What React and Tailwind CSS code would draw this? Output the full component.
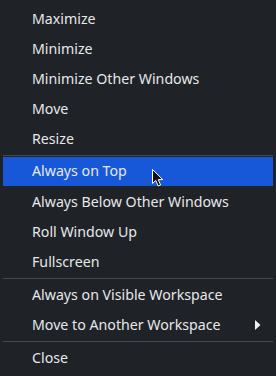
import { Fragment } from 'react';

const groups = [
  ['Maximize', 'Minimize', 'Minimize Other Windows', 'Move', 'Resize'],
  ['Always on Top', 'Always Below Other Windows', 'Roll Window Up', 'Fullscreen'],
  ['Always on Visible Workspace', 'Move to Another Workspace'],
  ['Close'],
];

const MenuItem = ({ label, active, submenu }) => (
  <div
    className={`relative flex h-[30px] items-center pl-[29px] pr-[10px] ${
      active ? 'border-b border-transparent bg-[#1658d8] bg-clip-padding' : ''
    }`}
  >
    <span className="text-[14.2px] leading-none text-[#e6e8ea]">{label}</span>
    {submenu && (
      <svg className="absolute right-[12px] top-[10px]" width="6" height="10" viewBox="0 0 6 10">
        <path d="M0 0 L5.5 5 L0 10 Z" fill="#f2f2f2" />
      </svg>
    )}
    {active && (
      <svg className="absolute left-[148px] top-[11px]" width="14" height="20" viewBox="0 0 14 20">
        <path
          d="M1.5 1.5 L1.5 15.5 L4.8 12.4 L7.2 18 L9.6 17 L7.3 11.6 L11.8 11.6 Z"
          fill="#111"
          stroke="#fff"
          strokeWidth="1"
          strokeLinejoin="round"
        />
      </svg>
    )}
  </div>
);

const Separator = () => (
  <div className="flex h-[3px] items-center">
    <div className="h-px w-full bg-[#45484c]" />
  </div>
);

export default function App() {
  return (
    <div
      className="h-[376px] w-[276px] overflow-hidden bg-[#1f2226] px-[3px] pt-[4px]"
      style={{ fontFamily: '"Noto Sans", "Open Sans", sans-serif' }}
    >
      {groups.map((group, gi) => (
        <Fragment key={gi}>
          {gi > 0 && <Separator />}
          {group.map((label) => (
            <MenuItem
              key={label}
              label={label}
              active={label === 'Always on Top'}
              submenu={label === 'Move to Another Workspace'}
            />
          ))}
        </Fragment>
      ))}
    </div>
  );
}
